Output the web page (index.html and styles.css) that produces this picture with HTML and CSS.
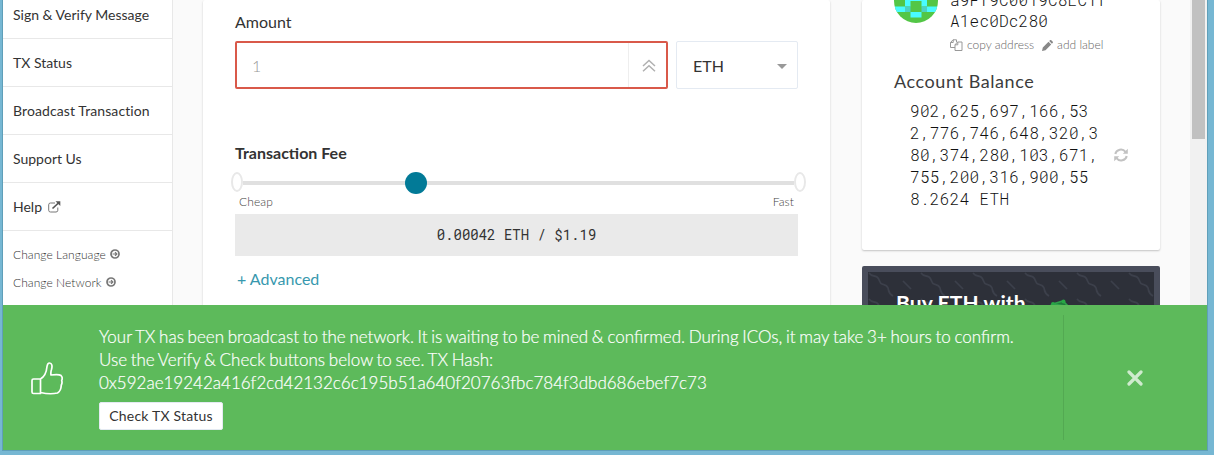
FILE: index.html
```html
<!DOCTYPE html>
<html lang="en">
<head>
<meta charset="utf-8">
<title>Send Ether</title>
<link rel="stylesheet" href="styles.css">
</head>
<body>
<div class="window">
  <div class="page">
    <nav class="nav">
      <a class="nav-item">Sign &amp; Verify Message</a>
      <a class="nav-item">TX Status</a>
      <a class="nav-item spaced">Broadcast Transaction</a>
      <a class="nav-item">Support Us</a>
      <a class="nav-item">Help
        <svg width="13" height="12" viewBox="0 0 13 12" fill="none" stroke="#777"><path d="M7 2H2.5Q.7 2 .7 3.8V9.3Q.7 11 2.500 11H8Q9.800 11 9.800 9.300V6.500"/><path d="M4.500 7.500 11 1.500" stroke-width="1.700" stroke="#555"/><path d="M7.500.3H12.300V5z" fill="#555" stroke="none"/></svg>
      </a>
      <a class="nav-small">Change Language
        <svg width="10" height="10" viewBox="0 0 10 10" fill="none" stroke="#777"><circle cx="5" cy="5" r="4" stroke-width="1.700"/><path d="M2.500 5H6.500M5 3.100 6.900 5 5 6.900" stroke-width="1.200"/></svg>
      </a>
      <a class="nav-small">Change Network
        <svg width="10" height="10" viewBox="0 0 10 10" fill="none" stroke="#777"><circle cx="5" cy="5" r="4" stroke-width="1.700"/><path d="M2.500 5H6.500M5 3.100 6.900 5 5 6.900" stroke-width="1.200"/></svg>
      </a>
    </nav>
    <main class="card form">
      <label class="label">Amount</label>
      <div class="row">
        <div class="amount"><span class="placeholder">1</span>
          <span class="max"><svg width="14" height="14" viewBox="0 0 14 14" fill="none" stroke="#b0b0b0" stroke-width="1.5"><path d="M1 7 7 1.5 13 7M1 12.3 7 6.8 13 12.3"/></svg></span>
        </div>
        <div class="unit">ETH <i class="caret"></i></div>
      </div>
      <h2 class="fee-title">Transaction Fee</h2>
      <div class="slider"><i class="stop"></i><i class="rail"></i><i class="stop"></i><i class="knob"></i></div>
      <div class="ends"><span>Cheap</span><span>Fast</span></div>
      <div class="fee mono">0.00042 ETH / $1.19</div>
      <a class="advanced">+ Advanced</a>
    </main>
    <aside class="side">
      <section class="card account">
        <div class="who">
          <svg class="avatar" width="44" height="44" viewBox="0 0 8 8"><path fill="#53c646" d="M0 0h8v8H0z"/><path fill="#49fcff" d="M2 3h4v1H2zM2 4h1v1H2zM5 4h1v1H5zM0 5h2v1H0zM6 5h2v1H6zM3 6h2v1H3z"/><path fill="#4bd3c4" d="M2 5h1v1H2zM5 5h1v1H5z"/></svg>
          <div>
            <div class="addr mono">a9Ff9C0019C8EC1f<br>A1ec0Dc280</div>
            <div class="tools">
              <svg width="13" height="12" viewBox="0 0 13 12" fill="none" stroke="#999"><path d="M5 8.5H.5V3.5L3 .8H6.500V3M3.200.8V3.500H.5M7.500 3H12V11.500H5V5.800zM7.800 3V5.800H5"/></svg>
              <span>copy address</span>
              <svg class="pen" width="11" height="11" viewBox="0 0 11 11" fill="#888"><path d="M0 11 .8 7.500 6.500 1.800 9.200 4.500 3.500 10.200zM7.200 1.100 8.300.1Q8.800-.2 9.300.2L10.800 1.700Q11.200 2.200 10.800 2.700L9.900 3.800z"/></svg>
              <span>add label</span>
            </div>
          </div>
        </div>
        <h3 class="bal-title">Account Balance</h3>
        <div class="bal">
          <div class="mono">902,625,697,166,53<br>2,776,746,648,320,3<br>80,374,280,103,671,<br>755,200,316,900,55<br>8.2624 ETH</div>
          <svg width="14" height="14" viewBox="0 0 14 14" fill="none" stroke="#c2c2c2" stroke-width="2"><path d="M1.300 6A5.700 5.500 0 0 1 11.500 3.800M12.700 8A5.700 5.500 0 0 1 2.500 10.200"/><path fill="#c2c2c2" stroke="none" d="M13.800.8V5.800H8.800zM.2 13.200V8.200H5.200z"/></svg>
        </div>
      </section>
      <section class="promo">
        <svg class="pattern" width="286" height="33" viewBox="0 0 286 33" fill="none" stroke="#3c404b" stroke-width="1.600">
          <defs><pattern id="sq" width="52" height="26" patternUnits="userSpaceOnUse"><path d="M1 1C4 5 6 3 9 5S11 11 14 12 19 13 20 16 20 21 25 24M35 9 43 17"/></pattern></defs>
          <path fill="url(#sq)" stroke="none" d="M0 0H286V33H0z"/>
          <path fill="#1f7a3a" d="M182 34 185 32 195 29 200 34M185 32 197 34" stroke="#2ea14b"/><circle cx="185" cy="32" r="2" fill="#28a745" stroke="none"/><circle cx="195.500" cy="29.500" r="2" fill="#28a745" stroke="none"/>
        </svg>
        <div class="promo-text">Buy ETH with</div>
      </section>
    </aside>
    <div class="scroll"><i class="thumb"></i></div>
  </div>
  <footer class="alert">
    <svg class="thumbup" width="32" height="33" viewBox="0 0 32 33" fill="none" stroke="#fff" stroke-width="1.700" stroke-linejoin="round"><path d="M1 18.500Q1 17 2.500 17H9.500V31.500H2.500Q1 31.500 1 30zM9.500 17C13 15 15.500 10 16 4.500Q16.500 1 18.500 1C21 1 21.500 4 20.500 7.500Q19.500 10.500 20 13C24 12.500 28 12 30 13.500Q32 15.500 30.700 18.500 31.500 21 30.300 23 30 29 26.500 31C21 32.300 15 31.800 9.500 30.500"/></svg>
    <div class="msg">
      <p>Your TX has been broadcast to the network. It is waiting to be mined &amp; confirmed. During ICOs, it may take 3+ hours to confirm.<br>Use the Verify &amp; Check buttons below to see. TX Hash:<br>0x592ae19242a416f2cd42132c6c195b51a640f20763fbc784f3dbd686ebef7c73</p>
      <button class="check">Check TX Status</button>
    </div>
    <div class="close"><svg width="16" height="16" viewBox="0 0 16 16" fill="none" stroke="#cfebce" stroke-width="3.200" stroke-linecap="round"><path d="M2 2 14 14M14 2 2 14"/></svg></div>
  </footer>
</div>
</body>
</html>
```
FILE: styles.css
```css
* { box-sizing: border-box; }
body { margin: 0; height: 455px; overflow: hidden; background: #76b7d3; font-family: Lato, sans-serif; color: #333; }
.window { width: 1206px; height: 451px; margin-left: 2px; border: 1px solid #5f9fb9; border-top: 0; display: flex; flex-direction: column; overflow: hidden; }
.page { height: 305px; display: flex; background: #fafafa; overflow: hidden; }
.nav { width: 170px; flex: none; background: #fff; border-right: 1px solid #e8e8e8; margin-top: -9px; height: 314px; }
.nav-item { display: flex; align-items: center; gap: 6px; height: 48px; padding-left: 10px; border-bottom: 1px solid #e8e8e8; font-size: 14px; white-space: nowrap; }
.spaced { letter-spacing: .1px; }
.nav-small { display: flex; align-items: center; gap: 4px; height: 28px; padding-left: 10px; font-size: 12px; font-weight: 300; color: #333; letter-spacing: .06px; }
.nav-item + .nav-small { margin-top: 9px; }
.card { background: #fff; border-radius: 2px; box-shadow: 0 1px 2px rgba(0,0,0,.22); }
.form { width: 627px; height: 340px; margin-left: 30px; padding: 0 32px; flex: none; }
.label { display: block; margin-top: 12px; font-size: 16px; line-height: 20px; }
.row { display: flex; gap: 8px; margin-top: 9px; height: 48px; }
.amount { width: 433px; border: 2px solid #d9594a; border-radius: 2px; display: flex; font-size: 16px; font-weight: 300; color: #999; }
.placeholder { flex: 1; padding: 13px 15px; line-height: 20px; }
.max { width: 38px; border-left: 1px solid #eee; display: flex; align-items: center; justify-content: center; padding: 2px 0 0 2px; }
.unit { width: 122px; border: 1px solid #e4eaf2; border-radius: 2px; display: flex; align-items: center; justify-content: space-between; padding: 0 10px 0 16px; font-size: 16px; }
.caret { border: 5px solid transparent; border-top-color: #999; border-bottom: 0; margin-top: 2px; }
.fee-title { margin: 54px 0 0; font-size: 16px; line-height: 20px; font-weight: 700; }
.slider { display: flex; align-items: center; position: relative; height: 22px; margin: 9px -8px 0 -4px; }
.stop { width: 12px; height: 20px; border: 2px solid #e8e8e8; border-radius: 50%; background: #fff; margin-top: -2px; }
.rail { flex: 1; height: 4px; background: #e0e0e0; }
.knob { position: absolute; left: 174px; top: 0; width: 22px; height: 22px; border-radius: 50%; background: #027a97; }
.ends { display: flex; justify-content: space-between; padding: 0 4px; height: 20px; line-height: 16px; font-size: 12px; font-weight: 300; color: #444; letter-spacing: .1px; }
.mono { font-family: "Roboto Mono", "DejaVu Sans Mono", monospace; }
.fee { height: 42px; line-height: 42px; background: #eaeaea; text-align: center; font-size: 14px; }
.advanced { display: block; margin: 13px 0 0 2px; line-height: 20px; font-size: 16px; color: #3798ae; }
.side { width: 298px; margin-left: 32px; flex: none; }
.account { height: 250px; padding-left: 32px; }
.who { display: flex; gap: 12px; height: 52px; }
.avatar { border-radius: 50%; margin-top: -21px; }
.addr { font-size: 16px; font-weight: 300; letter-spacing: .2px; line-height: 21px; margin: -11px 0 0; white-space: nowrap; color: #111; }
.tools { display: flex; align-items: center; gap: 4px; margin-top: 5px; font-size: 12px; font-weight: 300; color: #666; line-height: 18px; }
.pen { margin-left: 4px; }
.bal-title { margin: 18px 0 0; font-size: 18px; line-height: 22px; font-weight: 400; letter-spacing: .58px; color: #3c3c3c; }
.bal { display: flex; align-items: center; gap: 15px; margin: 8px 0 0 16px; font-size: 16px; line-height: 22px; font-weight: 300; letter-spacing: .33px; color: #111; }
.promo { position: relative; height: 80px; margin-top: 16px; border: 6px solid #494d5b; border-radius: 2px; background: #2d3039; }
.pattern { position: absolute; left: 0; top: 0; }
.promo-text { position: relative; padding: 18px 0 0 28px; line-height: 26px; font-size: 21px; font-weight: 700; color: #fff; letter-spacing: .1px; }
.scroll { width: 17px; margin-left: auto; background: #f1f1f1; padding: 0 2px; }
.thumb { display: block; width: 13px; height: 139px; background: #c1c1c1; }
.alert { height: 145px; background: #5dba5b; display: flex; color: #fff; }
.thumbup { margin: 57px 0 0 28px; flex: none; }
.msg { width: 964px; margin-left: 36px; padding-top: 20px; flex: none; }
.msg p { margin: 0; font-size: 17px; line-height: 23px; font-weight: 300; white-space: nowrap; word-spacing: -.92px; -webkit-text-stroke: .2px #fff; }
.check { display: block; margin-top: 8px; width: 124px; height: 28px; padding: 0 0 2px; border: 1px solid #e4eaf2; border-radius: 2px; background: #fff; color: #333; font: 14px Lato, sans-serif; letter-spacing: .2px; }
.close { flex: 1; margin: 10px 0; border-left: 1px solid #53a952; display: flex; align-items: center; justify-content: center; padding-right: 2px; }
```
